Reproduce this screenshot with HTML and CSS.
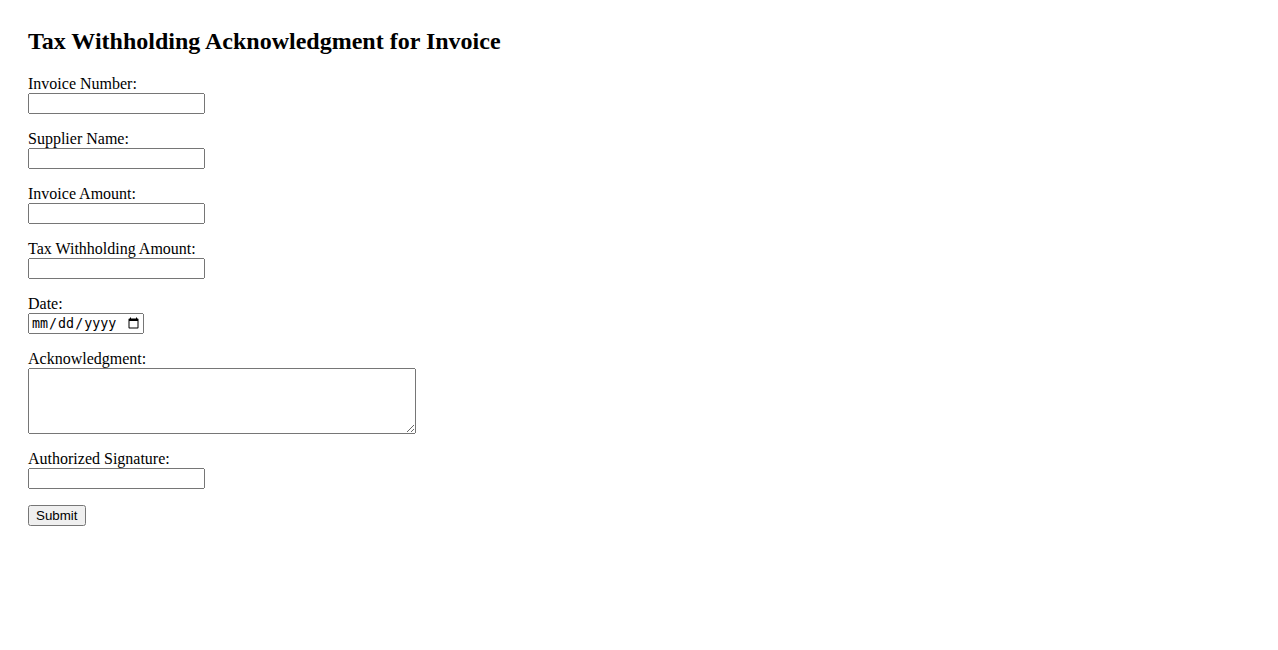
FILE: index.html
```html
<!DOCTYPE html>
<html lang="en">
<head>
<meta charset="utf-8">
<title>Tax Withholding Acknowledgment for Invoice</title>
<link rel="stylesheet" href="styles.css">
</head>
<body>
<div class="page">
  <h2 class="title">Tax Withholding Acknowledgment for Invoice</h2>
  <form class="form">
    <div class="field">
      <label class="label" for="invoice">Invoice Number:</label>
      <input class="text-input" type="text" id="invoice">
    </div>
    <div class="field">
      <label class="label" for="supplier">Supplier Name:</label>
      <input class="text-input" type="text" id="supplier">
    </div>
    <div class="field">
      <label class="label" for="amount">Invoice Amount:</label>
      <input class="text-input" type="text" id="amount">
    </div>
    <div class="field">
      <label class="label" for="tax">Tax Withholding Amount:</label>
      <input class="text-input" type="text" id="tax">
    </div>
    <div class="field">
      <label class="label" for="date">Date:</label>
      <input class="date-input" type="date" id="date">
    </div>
    <div class="field">
      <label class="label" for="ack">Acknowledgment:</label>
      <textarea class="textarea" id="ack" rows="4" cols="50"></textarea>
    </div>
    <div class="field">
      <label class="label" for="sig">Authorized Signature:</label>
      <input class="text-input" type="text" id="sig">
    </div>
    <button class="submit" type="submit">Submit</button>
  </form>
</div>
</body>
</html>
```
FILE: styles.css
```css
body {
  margin: 8px;
  font-family: "Liberation Serif", "Times New Roman", serif;
  font-size: 16px;
  color: #000;
  background: #fff;
}
.page {
  padding: 20px;
}
.title {
  margin: 0 0 20px;
  font-size: 24px;
  font-weight: bold;
}
.field {
  margin-bottom: 16px;
}
.label {
  display: block;
}
.text-input {
  box-sizing: border-box;
  width: 177px;
  height: 21px;
  font-family: "Liberation Sans", Arial, sans-serif;
}
.date-input {
  box-sizing: border-box;
  width: 116px;
  height: 21px;
}
.textarea {
  display: block;
  box-sizing: border-box;
  width: 388px;
  height: 66px;
  margin: 0;
}
.submit {
  font-family: "Liberation Sans", Arial, sans-serif;
  font-size: 13.333px;
  padding: 1px 7px 1px 6px;
  height: 21px;
}
```
